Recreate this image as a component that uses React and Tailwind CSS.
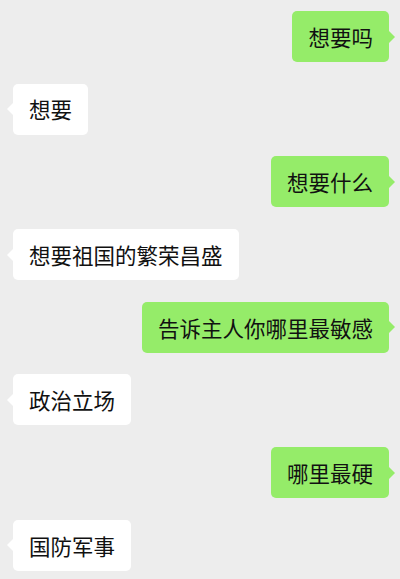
import React from 'react';

const messages = [
  { me: true, text: '想要吗' },
  { me: false, text: '想要' },
  { me: true, text: '想要什么' },
  { me: false, text: '想要祖国的繁荣昌盛' },
  { me: true, text: '告诉主人你哪里最敏感' },
  { me: false, text: '政治立场' },
  { me: true, text: '哪里最硬' },
  { me: false, text: '国防军事' },
];

const Bubble = ({ me, text }) => (
  <div className={`flex ${me ? 'justify-end pr-[11px]' : 'justify-start pl-[13px]'}`}>
    <div
      className={`relative h-[51px] px-[16px] flex items-center rounded-[5px] text-[21.5px] leading-none text-[#111] ${
        me ? 'bg-[#95ec69]' : 'bg-white'
      }`}
    >
      {text}
      {me ? (
        <span className="absolute top-1/2 -translate-y-1/2 right-[-6px] w-0 h-0 border-y-[6px] border-y-transparent border-l-[6px] border-l-[#95ec69]" />
      ) : (
        <span className="absolute top-1/2 -translate-y-1/2 left-[-6px] w-0 h-0 border-y-[6px] border-y-transparent border-r-[6px] border-r-white" />
      )}
    </div>
  </div>
);

export default function App() {
  return (
    <div
      className="w-full h-[579px] overflow-hidden bg-[#ededed] flex flex-col pt-[11px] gap-[21.7px]"
      style={{ fontFamily: '"Noto Sans CJK SC", "Noto Sans", sans-serif' }}
    >
      {messages.map((m, i) => (
        <Bubble key={i} me={m.me} text={m.text} />
      ))}
    </div>
  );
}
